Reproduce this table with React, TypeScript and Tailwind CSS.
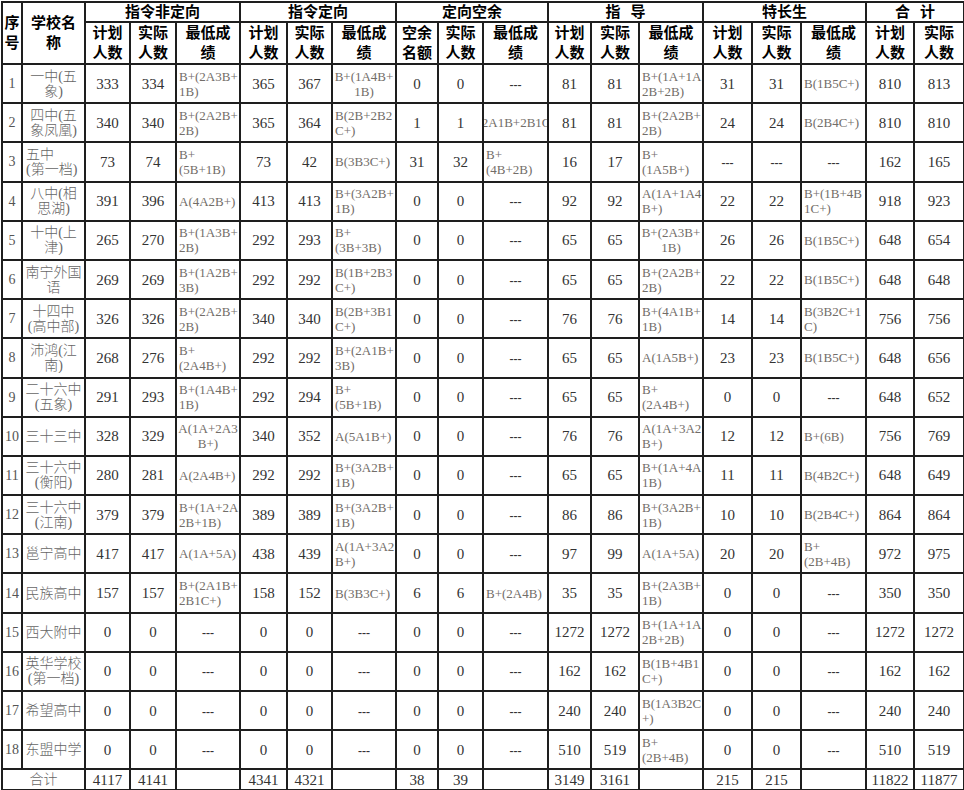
import React from 'react';

// 19 columns: seq, name, then 6 groups (plan, actual, min grade) and total (plan, actual)
const colWidths = [20, 63, 45, 46, 64, 47, 45, 64, 42, 45, 65, 43, 48, 64, 49, 49, 65, 48, 50];

// grade strings: "\n" = line break, "^" = centered cell, "!" = centered single line clipped
const rows: string[][] = [
  ['1', '一中(五\n象)', '333', '334', 'B+(2A3B+\n1B)', '365', '367', '^B+(1A4B+\n1B)', '0', '0', '---', '81', '81', 'B+(1A+1A\n2B+2B)', '31', '31', 'B(1B5C+)', '810', '813'],
  ['2', '四中(五\n象凤凰)', '340', '340', 'B+(2A2B+\n2B)', '365', '364', 'B(2B+2B2\nC+)', '1', '1', '!B(2A1B+2B1C+)', '81', '81', 'B+(2A2B+\n2B)', '24', '24', 'B(2B4C+)', '810', '810'],
  ['3', '<五中\n(第一档)', '73', '74', 'B+\n(5B+1B)', '73', '42', 'B(3B3C+)', '31', '32', 'B+\n(4B+2B)', '16', '17', 'B+\n(1A5B+)', '---', '---', '---', '162', '165'],
  ['4', '八中(相\n思湖)', '391', '396', 'A(4A2B+)', '413', '413', 'B+(3A2B+\n1B)', '0', '0', '---', '92', '92', 'A(1A+1A4\nB+)', '22', '22', 'B+(1B+4B\n1C+)', '918', '923'],
  ['5', '十中(上\n津)', '265', '270', 'B+(1A3B+\n2B)', '292', '293', 'B+\n(3B+3B)', '0', '0', '---', '65', '65', '^B+(2A3B+\n1B)', '26', '26', 'B(1B5C+)', '648', '654'],
  ['6', '南宁外国\n语', '269', '269', 'B+(1A2B+\n3B)', '292', '292', 'B(1B+2B3\nC+)', '0', '0', '---', '65', '65', 'B+(2A2B+\n2B)', '22', '22', 'B(1B5C+)', '648', '648'],
  ['7', '十四中\n(高中部)', '326', '326', 'B+(2A2B+\n2B)', '340', '340', 'B(2B+3B1\nC+)', '0', '0', '---', '76', '76', 'B+(4A1B+\n1B)', '14', '14', 'B(3B2C+1\nC)', '756', '756'],
  ['8', '沛鸿(江\n南)', '268', '276', 'B+\n(2A4B+)', '292', '292', 'B+(2A1B+\n3B)', '0', '0', '---', '65', '65', 'A(1A5B+)', '23', '23', 'B(1B5C+)', '648', '656'],
  ['9', '二十六中\n(五象)', '291', '293', 'B+(1A4B+\n1B)', '292', '294', 'B+\n(5B+1B)', '0', '0', '---', '65', '65', 'B+\n(2A4B+)', '0', '0', '---', '648', '652'],
  ['10', '三十三中', '328', '329', '^A(1A+2A3\nB+)', '340', '352', 'A(5A1B+)', '0', '0', '---', '76', '76', 'A(1A+3A2\nB+)', '12', '12', 'B+(6B)', '756', '769'],
  ['11', '三十六中\n(衡阳)', '280', '281', 'A(2A4B+)', '292', '292', 'B+(3A2B+\n1B)', '0', '0', '---', '65', '65', 'B+(1A+4A\n1B)', '11', '11', 'B(4B2C+)', '648', '649'],
  ['12', '三十六中\n(江南)', '379', '379', 'B+(1A+2A\n2B+1B)', '389', '389', 'B+(3A2B+\n1B)', '0', '0', '---', '86', '86', 'B+(3A2B+\n1B)', '10', '10', 'B(2B4C+)', '864', '864'],
  ['13', '邕宁高中', '417', '417', 'A(1A+5A)', '438', '439', 'A(1A+3A2\nB+)', '0', '0', '---', '97', '99', 'A(1A+5A)', '20', '20', 'B+\n(2B+4B)', '972', '975'],
  ['14', '民族高中', '157', '157', 'B+(2A1B+\n2B1C+)', '158', '152', 'B(3B3C+)', '6', '6', 'B+(2A4B)', '35', '35', 'B+(2A3B+\n1B)', '0', '0', '---', '350', '350'],
  ['15', '西大附中', '0', '0', '---', '0', '0', '---', '0', '0', '---', '1272', '1272', 'B+(1A+1A\n2B+2B)', '0', '0', '---', '1272', '1272'],
  ['16', '英华学校\n(第一档)', '0', '0', '---', '0', '0', '---', '0', '0', '---', '162', '162', 'B(1B+4B1\nC+)', '0', '0', '---', '162', '162'],
  ['17', '希望高中', '0', '0', '---', '0', '0', '---', '0', '0', '---', '240', '240', 'B(1A3B2C\n+)', '0', '0', '---', '240', '240'],
  ['18', '东盟中学', '0', '0', '---', '0', '0', '---', '0', '0', '---', '510', '519', 'B+\n(2B+4B)', '0', '0', '---', '510', '519'],
];

const totals = ['4117', '4141', '', '4341', '4321', '', '38', '39', '', '3149', '3161', '', '215', '215', '', '11822', '11877'];

const bd = 'border-2 border-[#1e1e1e] p-0 align-middle';

function Dash() {
  return <span className="text-[12px] font-bold text-[#333]">---</span>;
}

function NumCell({ v }: { v: string }) {
  if (v === '---') {
    return (
      <td className={`${bd} text-center`}>
        <Dash />
      </td>
    );
  }
  return <td className={`${bd} text-center text-[15px] leading-[16px] text-[#333]`}>{v}</td>;
}

function GradeCell({ v }: { v: string }) {
  if (v === '') return <td className={bd}></td>;
  if (v === '---') {
    return (
      <td className={`${bd} text-center`}>
        <Dash />
      </td>
    );
  }
  if (v.startsWith('!')) {
    return (
      <td className={`${bd} text-[13px] leading-[15px] text-[#726d68]`}>
        <div className="flex justify-center overflow-hidden">
          <span className="whitespace-nowrap">{v.slice(1)}</span>
        </div>
      </td>
    );
  }
  const center = v.startsWith('^');
  const lines = (center ? v.slice(1) : v).split('\n');
  return (
    <td className={`${bd} text-[13px] leading-[15px] text-[#726d68] ${center ? 'text-center' : 'text-left pl-[2px]'}`}>
      {lines.map((l, i) => (
        <div key={i} className="whitespace-nowrap overflow-hidden">
          {l}
        </div>
      ))}
    </td>
  );
}

function NameCell({ v }: { v: string }) {
  const left = v.startsWith('<');
  const lines = (left ? v.slice(1) : v).split('\n');
  return (
    <td className={`${bd} text-[14px] leading-[15px] font-light text-[#666] ${left ? 'text-left pl-[3px]' : 'text-center'}`}>
      {lines.map((l, i) => (
        <div key={i} className="whitespace-nowrap overflow-hidden">
          {l}
        </div>
      ))}
    </td>
  );
}

function SubHead({ a, b }: { a: string; b: string }) {
  return (
    <th className={`${bd} font-bold text-[15px] leading-[20px] text-black`}>
      <div>{a}</div>
      <div>{b}</div>
    </th>
  );
}

export default function App() {
  const group = `${bd} font-bold text-[15px] leading-[18px] text-black`;
  return (
    <div className="w-[964px] h-[790px] bg-white overflow-hidden font-['Liberation_Serif','Noto_Sans_CJK_SC',serif]">
      <table className="ml-[1px] mt-[1px] w-[962px] border-collapse table-fixed">
        <colgroup>
          {colWidths.map((w, i) => (
            <col key={i} style={{ width: w }} />
          ))}
        </colgroup>
        <thead>
          <tr className="h-[19px]">
            <th rowSpan={2} className={`${bd} font-bold text-[15px] leading-[20px] text-black`}>
              <div>序</div>
              <div>号</div>
            </th>
            <th rowSpan={2} className={`${bd} font-bold text-[15px] leading-[20px] text-black`}>
              <div>学校名</div>
              <div>称</div>
            </th>
            <th colSpan={3} className={group}>指令非定向</th>
            <th colSpan={3} className={group}>指令定向</th>
            <th colSpan={3} className={group}>定向空余</th>
            <th colSpan={3} className={group}>
              指<span className="inline-block w-[10px]"></span>导
            </th>
            <th colSpan={3} className={group}>特长生</th>
            <th colSpan={2} className={group}>
              合<span className="inline-block w-[10px]"></span>计
            </th>
          </tr>
          <tr className="h-[41px]">
            <SubHead a="计划" b="人数" />
            <SubHead a="实际" b="人数" />
            <SubHead a="最低成" b="绩" />
            <SubHead a="计划" b="人数" />
            <SubHead a="实际" b="人数" />
            <SubHead a="最低成" b="绩" />
            <SubHead a="空余" b="名额" />
            <SubHead a="实际" b="人数" />
            <SubHead a="最低成" b="绩" />
            <SubHead a="计划" b="人数" />
            <SubHead a="实际" b="人数" />
            <SubHead a="最低成" b="绩" />
            <SubHead a="计划" b="人数" />
            <SubHead a="实际" b="人数" />
            <SubHead a="最低成" b="绩" />
            <SubHead a="计划" b="人数" />
            <SubHead a="实际" b="人数" />
          </tr>
        </thead>
        <tbody>
          {rows.map((r) => (
            <tr key={r[0]} className="h-[39.2px]">
              <td className={`${bd} text-center text-[14px] text-[#555]`}>{r[0]}</td>
              <NameCell v={r[1]} />
              {r.slice(2).map((v, i) =>
                i % 3 === 2 && i < 15 ? <GradeCell key={i} v={v} /> : <NumCell key={i} v={v} />
              )}
            </tr>
          ))}
          <tr className="h-[21px]">
            <td colSpan={2} className={`${bd} text-center text-[14px] leading-[16px] font-light text-[#666]`}>
              合计
            </td>
            {totals.map((v, i) =>
              v === '' ? (
                <td key={i} className={bd}></td>
              ) : (
                <td key={i} className={`${bd} text-center text-[15px] leading-[16px] text-[#333]`}>
                  {v}
                </td>
              )
            )}
          </tr>
        </tbody>
      </table>
    </div>
  );
}
